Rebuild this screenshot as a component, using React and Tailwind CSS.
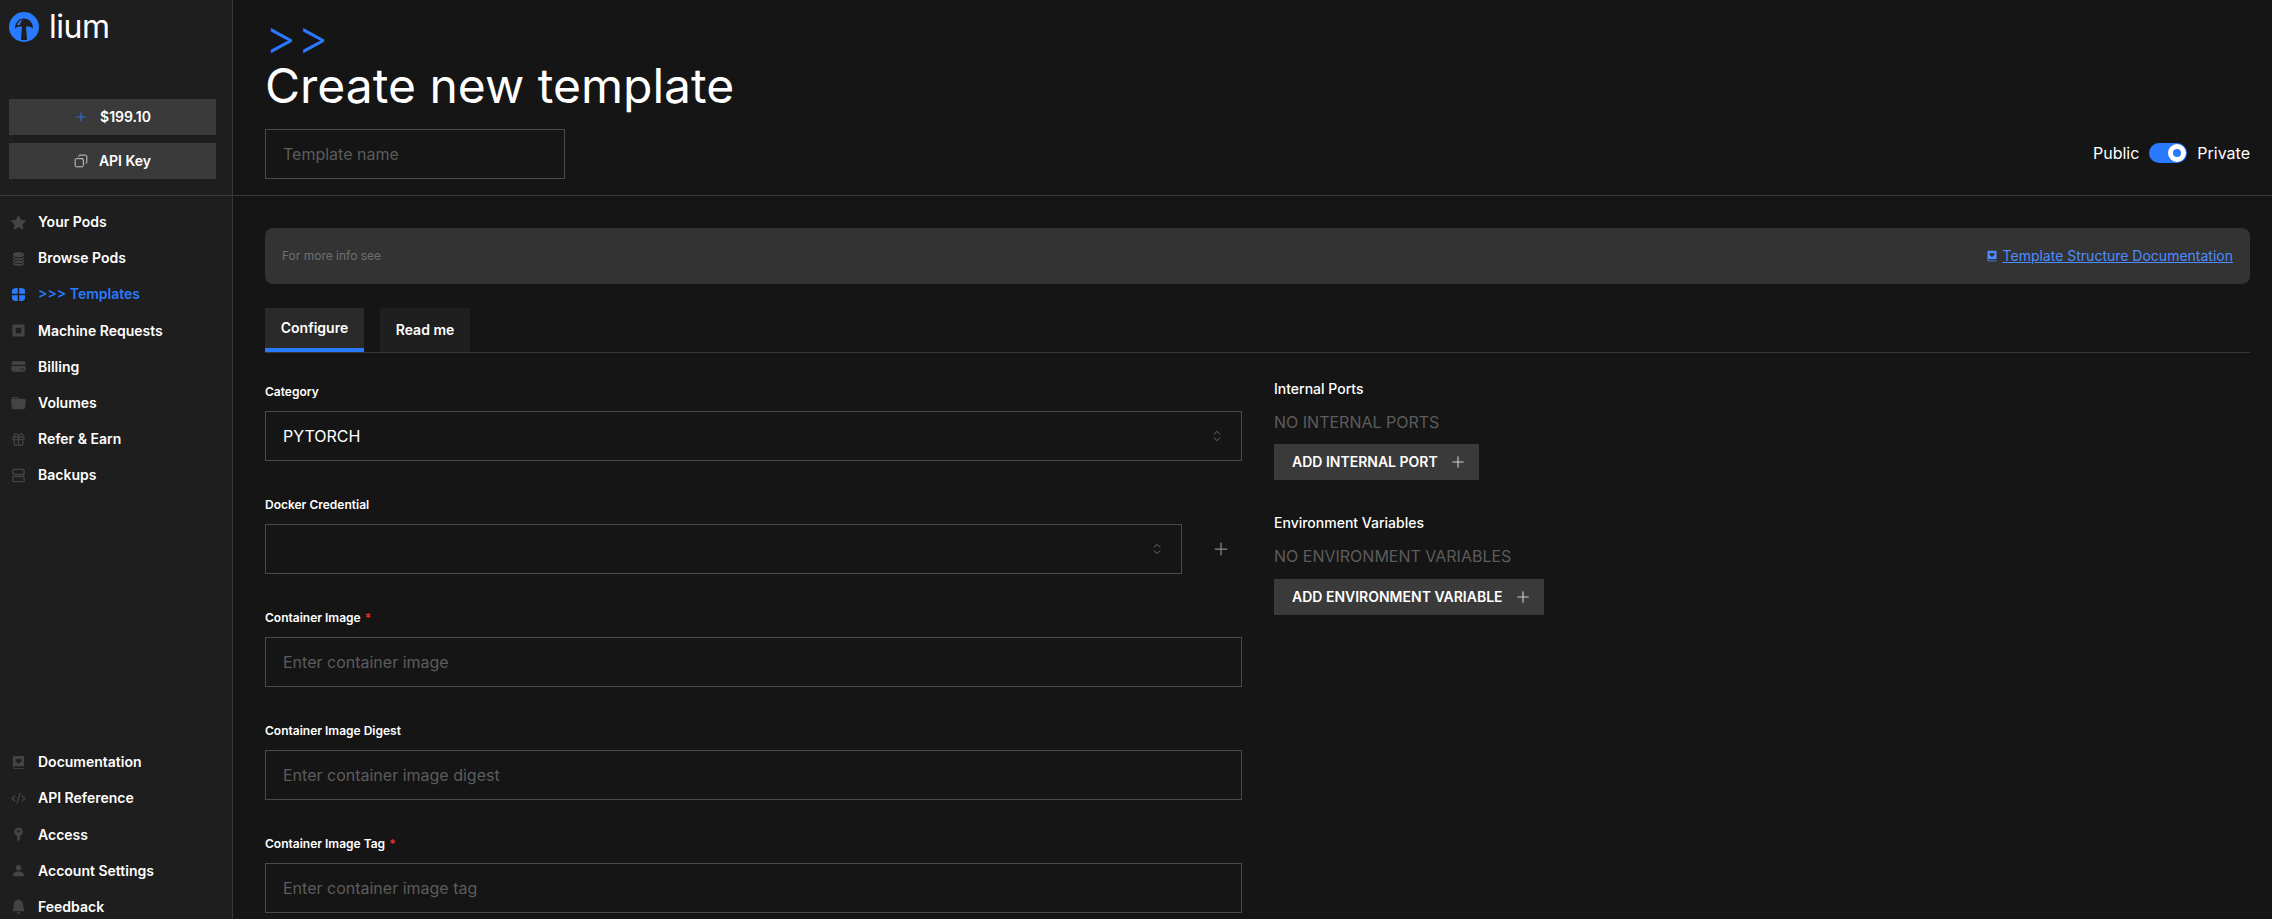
import React from 'react';
import {
  Plus,
  Copy,
  Gift,
  CodeXml,
  ChevronsUpDown,
} from 'lucide-react';
import {
  BsStarFill,
  BsDatabaseFill,
  BsFolderFill,
  BsPersonFill,
  BsBellFill,
} from 'react-icons/bs';

const Logo = () => (
  <svg viewBox="0 0 30 30" className="w-[30px] h-[30px] shrink-0">
    <circle cx="15" cy="15" r="15" fill="#2a7aff" />
    <path d="M6 16.5C6 10.5 10 6.5 15 6.5s9 4 9 10c-2.5-2-5.5-2.5-7-1.5l1 13h-6l1-13c-1.5-1-4.500-.5-7 1.500z" fill="#1e1e1e" />
    <path d="M8 13c1-3 3-5 6-5-2 1-3 3-3 5z" fill="#2a7aff" />
  </svg>
);

const GridIcon = ({ className }) => (
  <svg viewBox="0 0 16 16" className={className} fill="currentColor">
    <path d="M7.200 1H5a4 4 0 0 0-4 4v2.200h6.200zM8.800 1H11a4 4 0 0 1 4 4v2.200H8.800zM7.200 8.800H1V11a4 4 0 0 0 4 4h2.200zM8.800 8.800H15V11a4 4 0 0 1-4 4H8.800z" />
  </svg>
);

const ChipIcon = ({ className }) => (
  <svg viewBox="0 0 16 16" className={className} fill="currentColor">
    <path fillRule="evenodd" d="M3 1.500h10A1.500 1.500 0 0 1 14.500 3v10a1.500 1.500 0 0 1-1.500 1.500H3A1.500 1.500 0 0 1 1.500 13V3A1.500 1.500 0 0 1 3 1.500zM5 5v6h6V5z" />
  </svg>
);

const CardIcon = ({ className }) => (
  <svg viewBox="0 0 16 16" className={className} fill="currentColor">
    <path fillRule="evenodd" d="M2.500 2.500h11A2 2 0 0 1 15.500 4.500V6H.5V4.500a2 2 0 0 1 2-2zM.5 7.500h15v4a2 2 0 0 1-2 2h-11a2 2 0 0 1-2-2zM10.500 10v1.500h3V10z" />
  </svg>
);

const ServerIcon = ({ className }) => (
  <svg viewBox="0 0 16 16" className={className} fill="none" stroke="currentColor" strokeWidth="1.500">
    <rect x="2" y="1.500" width="12" height="5.500" rx="1" />
    <rect x="2" y="9" width="12" height="5.500" rx="1" />
  </svg>
);

const BookIcon = ({ className }) => (
  <svg viewBox="0 0 16 16" className={className} fill="currentColor">
    <path fillRule="evenodd" d="M3.500 1H14v11H4a1 1 0 0 0 0 2h10v1H3.500A1.500 1.500 0 0 1 2 13.500v-11A1.500 1.500 0 0 1 3.500 1zM8 9.500 11 6.500C11.800 5.500 11 4 9.800 4 9 4 8.400 4.500 8 5 7.600 4.500 7 4 6.200 4 5 4 4.200 5.500 5 6.500z" />
  </svg>
);

const KeyIcon = ({ className }) => (
  <svg viewBox="0 0 16 16" className={className} fill="currentColor">
    <path fillRule="evenodd" d="M8 .5a4.500 4.500 0 0 1 1.500 8.740V13L8 15.500 6.500 13V9.240A4.500 4.500 0 0 1 8 .5zM8 3.200a1.300 1.300 0 1 0 0 2.600 1.300 1.300 0 0 0 0-2.600z" />
  </svg>
);

const navTop = [
  { label: 'Your Pods', icon: BsStarFill },
  { label: 'Browse Pods', icon: BsDatabaseFill },
  { label: '>>> Templates', icon: GridIcon, active: true },
  { label: 'Machine Requests', icon: ChipIcon },
  { label: 'Billing', icon: CardIcon },
  { label: 'Volumes', icon: BsFolderFill },
  { label: 'Refer & Earn', icon: Gift },
  { label: 'Backups', icon: ServerIcon },
];

const navBottom = [
  { label: 'Documentation', icon: BookIcon },
  { label: 'API Reference', icon: CodeXml },
  { label: 'Access', icon: KeyIcon },
  { label: 'Account Settings', icon: BsPersonFill },
  { label: 'Feedback', icon: BsBellFill },
];

const NavItem = ({ item }) => {
  const Icon = item.icon;
  return (
    <div className={`flex items-center h-[36.2px] pl-[9px] text-sm font-semibold ${item.active ? 'text-[#2a7aff]' : 'text-white'}`}>
      <span className={`w-[16px] h-[16px] mr-[12px] ml-[1px] flex items-center justify-center ${item.active ? 'text-[#2a7aff]' : 'text-[#444444]'}`}>
        <Icon className="w-[15px] h-[15px]" />
      </span>
      <span>{item.label}</span>
    </div>
  );
};

const Label = ({ children, required }) => (
  <label className="block text-xs font-semibold text-white mb-[10px] leading-[18px]">
    {children}
    {required && <span className="text-[#e5322d] ml-[4px]">*</span>}
  </label>
);

const TextField = ({ placeholder }) => (
  <input
    placeholder={placeholder}
    className="w-full h-[50px] px-[17px] bg-transparent border border-[#4a4a4a] text-base outline-none placeholder:text-[#5c5c5c]"
  />
);

const SelectBox = ({ value, className }) => (
  <div className={`h-[50px] pl-[17px] pr-[17px] border border-[#4a4a4a] flex items-center justify-between text-base text-white ${className}`}>
    <span>{value}</span>
    <ChevronsUpDown className="w-[14px] h-[16px] text-[#777777]" strokeWidth={1.500} />
  </div>
);

const AddButton = ({ children }) => (
  <button className="h-[36px] w-fit pl-[18px] pr-[12px] bg-[#3a3a3a] text-sm font-semibold text-white flex items-center gap-[11px]">
    {children}
    <Plus className="w-[18px] h-[18px] text-[#cccccc]" strokeWidth={1.500} />
  </button>
);

export default function App() {
  return (
    <div className="h-[919px] w-full flex overflow-hidden bg-[#151515] text-white font-['Inter',sans-serif]">
      {/* Sidebar */}
      <aside className="w-[233px] shrink-0 h-full bg-[#1e1e1e] border-r border-[#383838] flex flex-col">
        <div className="h-[196px] shrink-0 border-b border-[#383838] px-[9px] pt-[12px]">
          <div className="flex items-center h-[30px] gap-[10px]">
            <Logo />
            <span className="text-[32px] leading-none font-normal text-white tracking-[-0.5px]">lium</span>
          </div>
          <button className="mt-[57px] w-[207px] h-[36px] bg-[#3a3a3a] text-sm font-semibold flex items-center justify-center gap-[12px]">
            <Plus className="w-[14px] h-[14px] text-[#2a7aff]" strokeWidth={1.500} />
            $199.10
          </button>
          <button className="mt-[8px] w-[207px] h-[36px] bg-[#3a3a3a] text-sm font-semibold flex items-center justify-center gap-[11px]">
            <Copy className="w-[14px] h-[14px] text-[#dddddd] -scale-x-100" strokeWidth={1.500} />
            API Key
          </button>
        </div>
        <nav className="pt-[8px]">
          {navTop.map((item) => (
            <NavItem key={item.label} item={item} />
          ))}
        </nav>
        <nav className="mt-auto pb-[-6px] mb-[-6px]">
          {navBottom.map((item) => (
            <NavItem key={item.label} item={item} />
          ))}
        </nav>
      </aside>

      {/* Main */}
      <main className="flex-1 min-w-0">
        <header className="h-[196px] border-b border-[#383838] pl-[32px] pr-[22px] pt-[17px] flex items-end justify-between">
          <div className="h-full flex flex-col">
            <div className="text-[48px] leading-[40px] text-[#2a7aff] font-light tracking-[0.02em]">&gt;&gt;</div>
            <h1 className="text-[48px] leading-[58px] font-normal text-white -ml-[0px]">Create new template</h1>
            <input
              placeholder="Template name"
              className="mt-[14px] w-[300px] h-[50px] px-[17px] bg-transparent border border-[#4a4a4a] text-base outline-none placeholder:text-[#5c5c5c]"
            />
          </div>
          <div className="flex items-center gap-[10px] text-base text-white mb-[30px]">
            <span>Public</span>
            <span className="relative w-[38px] h-[20px] rounded-full bg-[#2a7aff]">
              <span className="absolute right-[1px] top-[1px] w-[18px] h-[18px] rounded-full border-[5px] border-white bg-[#2a7aff]" />
            </span>
            <span>Private</span>
          </div>
        </header>

        <div className="pl-[32px] pr-[22px] pt-[32px]">
          <div className="h-[56px] bg-[#333333] rounded-[8px] px-[17px] flex items-center justify-between">
            <span className="text-xs text-[#707070]">For more info see</span>
            <a className="flex items-center gap-[5px] text-sm text-[#4d8dff]">
              <BookIcon className="w-[12px] h-[12px]" />
              <span className="underline">Template Structure Documentation</span>
            </a>
          </div>

          <div className="mt-[24px] flex gap-[16px] border-b border-[#383838] h-[45px]">
            <div className="w-[99px] h-[44px] bg-[#2a2a2a] border-b-4 border-[#2a7aff] text-sm font-semibold flex items-center justify-center">Configure</div>
            <div className="w-[90px] h-[44px] bg-[#1f1f1f] text-sm font-semibold flex items-center justify-center">Read me</div>
          </div>

          <div className="flex mt-[30px] gap-[32px]">
            <div className="w-[977px] shrink-0 flex flex-col gap-[35px]">
              <div>
                <Label>Category</Label>
                <SelectBox value="PYTORCH" />
              </div>
              <div>
                <Label>Docker Credential</Label>
                <div className="flex items-center">
                  <SelectBox className="w-[917px]" />
                  <Plus className="ml-[29px] w-[20px] h-[20px] text-[#888888]" strokeWidth={1.500} />
                </div>
              </div>
              <div>
                <Label required>Container Image</Label>
                <TextField placeholder="Enter container image" />
              </div>
              <div>
                <Label>Container Image Digest</Label>
                <TextField placeholder="Enter container image digest" />
              </div>
              <div>
                <Label required>Container Image Tag</Label>
                <TextField placeholder="Enter container image tag" />
              </div>
            </div>

            <div className="flex-1">
              <div className="text-sm font-medium leading-[20px] -mt-[4px]">Internal Ports</div>
              <div className="mt-[13px] text-base leading-[20px] text-[#5c5c5c]">NO INTERNAL PORTS</div>
              <div className="mt-[12px]"><AddButton>ADD INTERNAL PORT</AddButton></div>
              <div className="mt-[33px] text-sm font-medium leading-[20px]">Environment Variables</div>
              <div className="mt-[13px] text-base leading-[20px] text-[#5c5c5c]">NO ENVIRONMENT VARIABLES</div>
              <div className="mt-[13px]"><AddButton>ADD ENVIRONMENT VARIABLE</AddButton></div>
            </div>
          </div>
        </div>
      </main>
    </div>
  );
}
